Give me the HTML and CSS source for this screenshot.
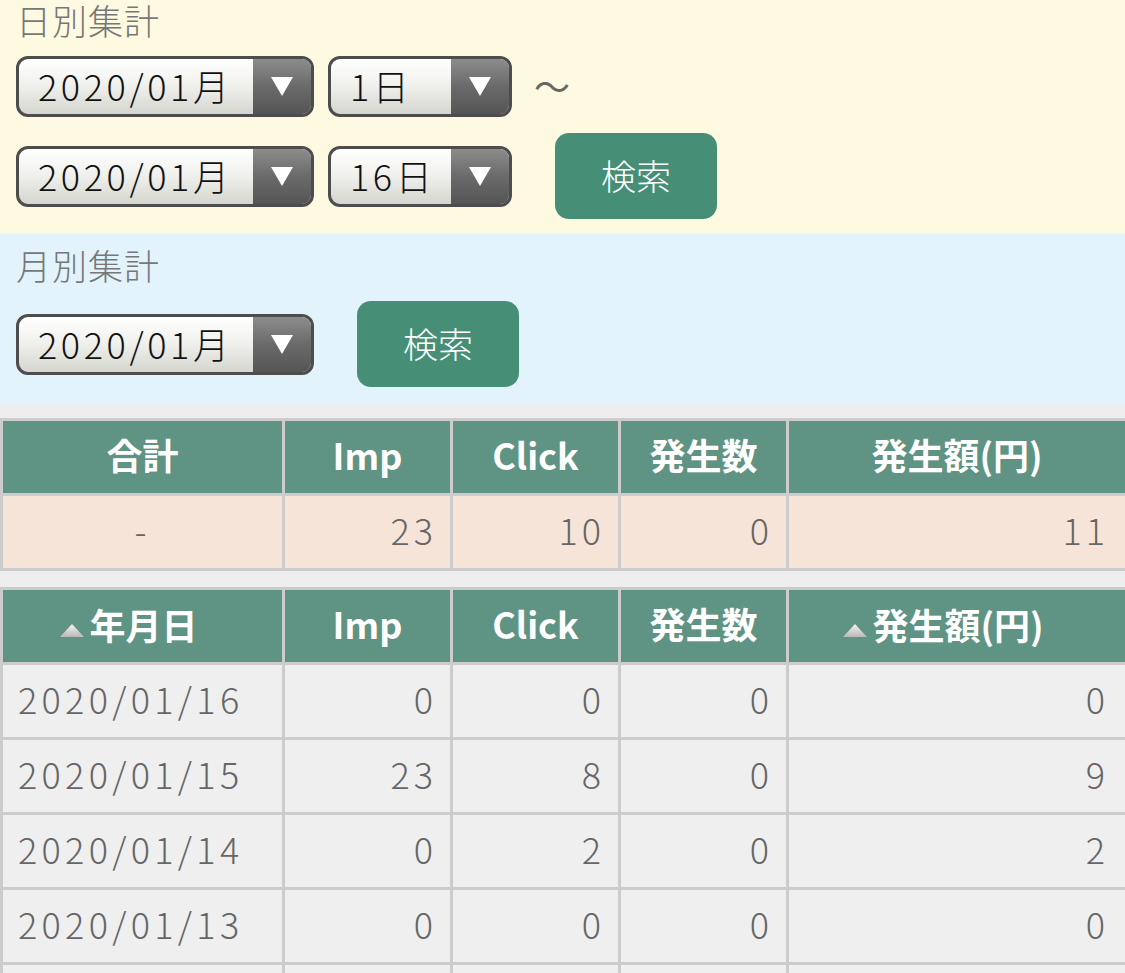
FILE: index.html
```html
<!DOCTYPE html>
<html lang="ja">
<head>
    <meta charset="UTF-8">
    <meta name="viewport" content="width=device-width, initial-scale=1.0">
    <title>集計レポート</title>
    <link rel="stylesheet" href="styles.css">
</head>
<body>
    <section class="panel panel-daily">
        <h2 class="panel-title">日別集計</h2>
        <div class="form-row">
            <div class="select select-month"><span class="select-value">2020/01月</span><span class="select-arrow"></span></div>
            <div class="select select-day"><span class="select-value">1日</span><span class="select-arrow"></span></div>
            <span class="tilde">〜</span>
        </div>
        <div class="form-row form-row-submit">
            <div class="select select-month"><span class="select-value">2020/01月</span><span class="select-arrow"></span></div>
            <div class="select select-day"><span class="select-value">16日</span><span class="select-arrow"></span></div>
            <button class="search-button">検索</button>
        </div>
    </section>

    <section class="panel panel-monthly">
        <h2 class="panel-title">月別集計</h2>
        <div class="form-row form-row-submit">
            <div class="select select-month"><span class="select-value">2020/01月</span><span class="select-arrow"></span></div>
            <button class="search-button">検索</button>
        </div>
    </section>

    <div class="report">
        <table class="report-table total-table">
            <colgroup>
                <col class="col-label"><col class="col-num"><col class="col-num"><col class="col-num"><col class="col-amount">
            </colgroup>
            <tr>
                <th>合計</th>
                <th>Imp</th>
                <th>Click</th>
                <th>発生数</th>
                <th>発生額(円)</th>
            </tr>
            <tr class="total-row">
                <td class="center">-</td>
                <td>23</td>
                <td>10</td>
                <td>0</td>
                <td class="amount">11</td>
            </tr>
        </table>

        <table class="report-table daily-table">
            <colgroup>
                <col class="col-label"><col class="col-num"><col class="col-num"><col class="col-num"><col class="col-amount">
            </colgroup>
            <tr>
                <th class="sortable"><span class="sort-icon"><svg width="26" height="15" viewBox="0 0 26 15"><defs><linearGradient id="sortA" x1="0" y1="0" x2="0" y2="1"><stop offset="0" stop-color="#f4f4f4"/><stop offset="1" stop-color="#b9b9b9"/></linearGradient></defs><path d="M13 1 L25 14 L1 14 Z" fill="url(#sortA)"/></svg></span>年月日</th>
                <th>Imp</th>
                <th>Click</th>
                <th>発生数</th>
                <th class="sortable"><span class="sort-icon"><svg width="26" height="15" viewBox="0 0 26 15"><defs><linearGradient id="sortB" x1="0" y1="0" x2="0" y2="1"><stop offset="0" stop-color="#f4f4f4"/><stop offset="1" stop-color="#b9b9b9"/></linearGradient></defs><path d="M13 1 L25 14 L1 14 Z" fill="url(#sortB)"/></svg></span>発生額(円)</th>
            </tr>
            <tr>
                <td class="date">2020/01/16</td>
                <td>0</td>
                <td>0</td>
                <td>0</td>
                <td class="amount">0</td>
            </tr>
            <tr>
                <td class="date">2020/01/15</td>
                <td>23</td>
                <td>8</td>
                <td>0</td>
                <td class="amount">9</td>
            </tr>
            <tr>
                <td class="date">2020/01/14</td>
                <td>0</td>
                <td>2</td>
                <td>0</td>
                <td class="amount">2</td>
            </tr>
            <tr>
                <td class="date">2020/01/13</td>
                <td>0</td>
                <td>0</td>
                <td>0</td>
                <td class="amount">0</td>
            </tr>
            <tr>
                <td class="date">2020/01/12</td>
                <td>0</td>
                <td>0</td>
                <td>0</td>
                <td class="amount">0</td>
            </tr>
        </table>
    </div>
</body>
</html>
```

FILE: styles.css
```css
* {
    margin: 0;
    padding: 0;
    box-sizing: border-box;
}
html {
    overflow: hidden;
}
body {
    font-family: "Noto Sans CJK JP", "Noto Sans", sans-serif;
    background: #eeeeee;
    color: #666;
}

/* Search panels */
.panel {
    padding: 0 16px;
}
.panel-daily {
    background: #fef9e1;
    padding-bottom: 15px;
}
.panel-monthly {
    background: #e2f3fb;
    padding-top: 11px;
    padding-bottom: 16px;
}
.panel-title {
    font-size: 35px;
    font-weight: 300;
    line-height: 44px;
    color: #777;
    letter-spacing: 1px;
    margin-bottom: 12px;
    margin-top: -2px;
    padding-bottom: 2px;
}
.form-row {
    display: flex;
    align-items: center;
}
.form-row + .form-row {
    margin-top: 16px;
}
.select {
    display: flex;
    height: 61px;
    border: 3px solid #4d4d4d;
    border-radius: 12px;
    overflow: hidden;
    background: linear-gradient(#ffffff 0%, #f1f1ee 45%, #d6d6d0 100%);
}
.select + .select {
    margin-left: 14px;
}
.select-month {
    width: 298px;
}
.select-day {
    width: 184px;
}
.select-value {
    flex: 1;
    font-size: 36px;
    font-weight: 300;
    letter-spacing: 3.6px;
    line-height: 53px;
    color: #111;
    padding-left: 19px;
    white-space: nowrap;
}
.select-arrow {
    width: 58px;
    position: relative;
    background: linear-gradient(#8c8c8c 0%, #6a6a6a 50%, #555 100%);
}
.select-arrow::after {
    content: "";
    position: absolute;
    left: 18px;
    top: 18px;
    border-left: 11px solid transparent;
    border-right: 11px solid transparent;
    border-top: 19px solid #fff;
}
.tilde {
    font-size: 36px;
    color: #666;
    margin-left: 22px;
    margin-top: -4px;
}
.search-button {
    width: 162px;
    height: 86px;
    margin-left: 43px;
    border: none;
    border-radius: 14px;
    background: #468f76;
    color: #fff;
    font-family: inherit;
    font-size: 35px;
    font-weight: 300;
    padding-bottom: 4px;
}

/* Report tables */
.report {
    padding-top: 15px;
}
.report-table {
    width: 100%;
    table-layout: fixed;
    border-collapse: collapse;
    border: 3px solid #cccccc;
    margin-bottom: 16px;
}
.col-label {
    width: 282px;
}
.col-num {
    width: 168px;
}
.col-amount {
    width: 339px;
}
.report-table th,
.report-table td {
    border: 3px solid #cccccc;
    height: 75px;
    font-size: 36px;
    white-space: nowrap;
    padding-bottom: 6px;
}
.report-table th {
    background: #5f9384;
    color: #fff;
    font-weight: bold;
    text-align: center;
}
.report-table th.sortable {
    padding-right: 28px;
}
.report-table td {
    background: #efefef;
    text-align: right;
    padding-right: 13px;
    font-weight: 300;
    letter-spacing: 4px;
}
.report-table td.amount {
    padding-right: 16px;
}
.total-row td {
    background: #f7e4d9;
}
.report-table td.center {
    text-align: center;
    padding-right: 0;
}
.report-table td.date {
    text-align: left;
    padding-left: 15px;
    letter-spacing: 4.3px;
}
.sort-icon {
    display: inline-block;
    vertical-align: 2px;
    margin-right: 4px;
}
```
